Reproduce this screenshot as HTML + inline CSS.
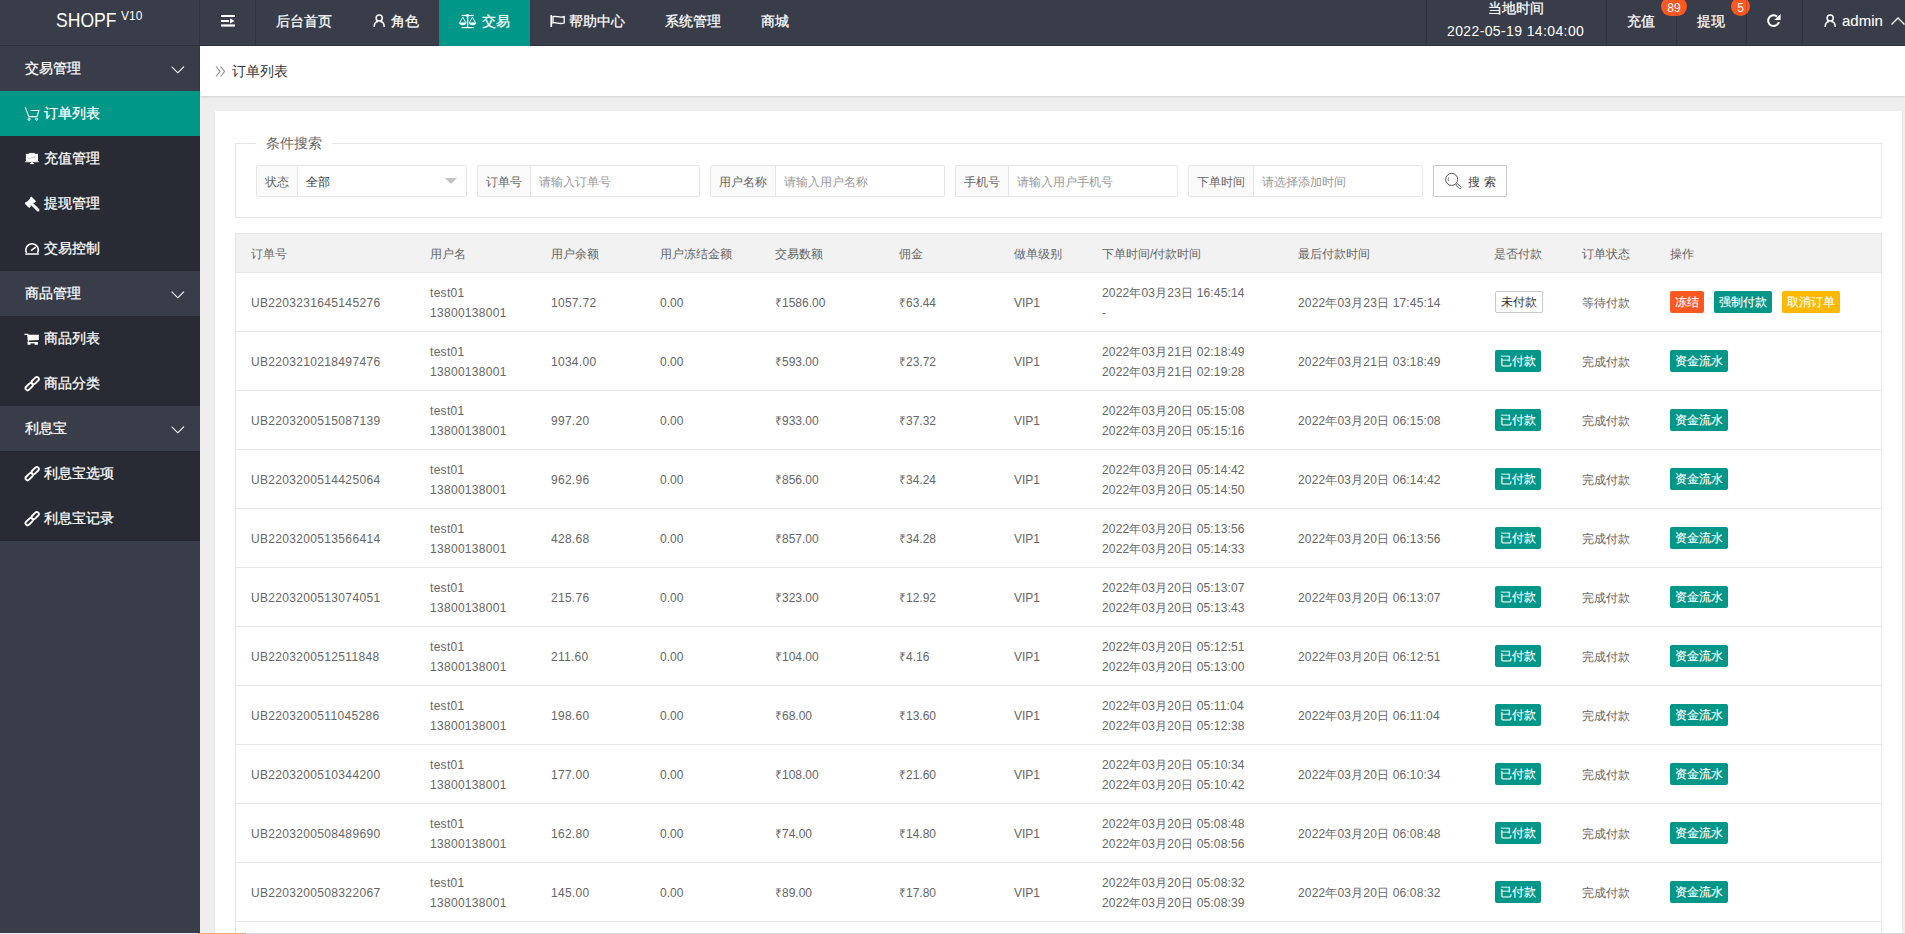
<!DOCTYPE html>
<html><head><meta charset="utf-8"><title>订单列表</title>
<style>
*{margin:0;padding:0;box-sizing:border-box}
html,body{width:1905px;height:934px;overflow:hidden}
body{background:#eeeeee;font-family:"Liberation Sans",sans-serif;font-size:14px;color:#666;position:relative}
.a{position:absolute;white-space:nowrap}
.hd{position:absolute;left:0;top:0;width:1905px;height:46px;background:#393D49;border-bottom:1px solid #2e313b}
.vs{position:absolute;top:0;width:1px;height:45px;background:rgba(0,0,0,.15);z-index:3}
.w{color:#fff;-webkit-text-stroke:0.25px #fff}
.side{position:absolute;left:0;top:46px;width:200px;height:888px;background:#393D49}
.side .it{position:absolute;left:0;width:200px;height:45px}
.side .ch{background:#282B33}
.side .on{background:#009688}
.side .tx{position:absolute;left:25px;top:0;line-height:45px;color:#fff;font-size:14px;white-space:nowrap;-webkit-text-stroke:0.25px #fff}
.side .ic{position:absolute;left:25px;top:0;width:14px;height:45px}
.side .tx2{left:44px}
.crumb{position:absolute;left:200px;top:46px;width:1705px;height:50px;background:#fff;box-shadow:0 1px 2px rgba(0,0,0,.12)}
.card{position:absolute;left:215px;top:111px;width:1687px;height:900px;background:#fff;box-shadow:0 1px 2px 0 rgba(0,0,0,.08)}
.fs{position:absolute;left:235px;top:143px;width:1647px;height:75px;border:1px solid #e6e6e6}
.lg{position:absolute;left:256px;top:133px;width:76px;height:20px;background:#fff;text-align:center;line-height:20px;font-size:14px;color:#666}
.grp{position:absolute;top:165px;height:32px;border:1px solid #e6e6e6;border-radius:2px;background:#fff}
.lab{position:absolute;left:0;top:0;height:30px;line-height:32px;background:#FAFAFA;border-right:1px solid #e6e6e6;font-size:12px;color:#666;padding:0 8px;border-radius:2px 0 0 2px}
.ph{position:absolute;top:1px;line-height:30px;font-size:12px;color:#999;white-space:nowrap}
.sbtn{position:absolute;left:1433px;top:165px;width:74px;height:32px;border:1px solid #C9C9C9;border-radius:2px;background:#fff}
.tbl{position:absolute;left:235px;top:233px;width:1647px;height:720px;border:1px solid #e6e6e6;border-bottom:0;background:#fff}
.thead{position:absolute;left:0;top:0;width:1645px;height:39px;background:#f2f2f2;border-bottom:1px solid #e6e6e6}
.th{position:absolute;top:1px;line-height:38px;font-size:12px;color:#666;white-space:nowrap}
.tr{position:absolute;left:0;width:1645px;height:59px;border-bottom:1px solid #e6e6e6}
.td{position:absolute;top:1px;line-height:58px;font-size:12px;color:#666;white-space:nowrap}
.td2{position:absolute;top:10px;line-height:20px;font-size:12px;color:#666;white-space:nowrap}
.btn{position:absolute;top:18px;height:22px;line-height:22px;padding:0 5px;font-size:12px;color:#fff;-webkit-text-stroke:0.15px #fff;background:#009688;border-radius:2px;white-space:nowrap}
.btn.pri{background:#fff;color:#333;-webkit-text-stroke:0;border:1px solid #C9C9C9;line-height:20px}
.btn.red{background:#FF5722}
.btn.yel{background:#FFB800}

</style></head>
<body>
<div class="hd">
  <div class="a w" style="left:56px;top:7px;font-size:19.5px;line-height:26px;transform:scaleX(0.9);transform-origin:0 0;-webkit-text-stroke:0">SHOPF</div><div class="a w" style="left:121px;top:6px;font-size:13px;line-height:20px;transform:scaleX(0.92);transform-origin:0 0;-webkit-text-stroke:0">V10</div>
  <div class="vs" style="left:199px"></div>
  <svg class="a" style="left:221px;top:15px" width="14" height="12" viewBox="0 0 14 12"><rect x="0" y="0" width="14" height="2" fill="#fff"/><rect x="0" y="5" width="8" height="2" fill="#fff"/><path d="M9 3.2 L13.6 6 L9 8.6Z" fill="#fff"/><rect x="0" y="9.4" width="14" height="2.2" fill="#fff"/></svg>
  <div class="vs" style="left:255px"></div>
  <div class="a w" style="left:276px;top:0;line-height:42px">后台首页</div>
  <svg class="a" style="left:373px;top:14px" width="13" height="14" viewBox="0 0 13 14"><circle cx="6.2" cy="4" r="3.1" fill="none" stroke="#fff" stroke-width="1.5"/><path d="M1.2 13 C1.2 9.8 3 7.8 5 7.6 M7.4 7.6 C9.4 7.8 11.2 9.8 11.2 13" fill="none" stroke="#fff" stroke-width="1.5"/></svg>
  <div class="a w" style="left:391px;top:0;line-height:42px">角色</div>
  <div class="a" style="left:439px;top:0;width:91px;height:46px;background:#009688"></div>
  <svg class="a" style="left:459px;top:14px" width="18" height="15" viewBox="0 0 18 15"><rect x="2.6" y="0.9" width="12.2" height="1.2" fill="#fff"/><circle cx="8.5" cy="1.5" r="1.4" fill="#fff"/><rect x="7.9" y="1" width="1.4" height="12.5" fill="#fff"/><rect x="2.6" y="13" width="12.2" height="1.2" fill="#fff"/><path d="M3.8 3.1 L0.6 8.8 M3.8 3.1 L6.9 8.8 M13.4 3.1 L10.2 8.8 M13.4 3.1 L16.6 8.8" stroke="#fff" stroke-width="1" fill="none"/><path d="M0 8.6 H7.3 Q7.1 11.2 3.65 11.2 Q0.2 11.2 0 8.6Z M10 8.6 H17.3 Q17.1 11.2 13.65 11.2 Q10.2 11.2 10 8.6Z" fill="#fff"/></svg>
  <div class="a w" style="left:482px;top:0;line-height:42px">交易</div>
  <svg class="a" style="left:550px;top:14px" width="16" height="14" viewBox="0 0 16 14"><rect x="0.4" y="1" width="1.7" height="12" fill="#fff"/><path d="M3 2.6 C6 1.2 9 4.4 14.2 2.6 V9 C9 10.8 6 7.6 3 9 Z" fill="none" stroke="#fff" stroke-width="1.3"/></svg>
  <div class="a w" style="left:569px;top:0;line-height:42px">帮助中心</div>
  <div class="a w" style="left:665px;top:0;line-height:42px">系统管理</div>
  <div class="a w" style="left:761px;top:0;line-height:42px">商城</div>

  <div class="vs" style="left:1426px"></div>
  <div class="a w" style="left:1488px;top:-2px;line-height:20px">当地时间</div>
  <div class="a w" style="left:1447px;top:21px;line-height:20px;letter-spacing:0.38px;-webkit-text-stroke:0">2022-05-19 14:04:00</div>
  <div class="vs" style="left:1606px"></div>
  <div class="a w" style="left:1627px;top:0;line-height:42px">充值</div>
  <div class="a" style="left:1661px;top:-3px;width:26px;height:19px;border-radius:10px;background:#FF5722;color:#fff;font-size:12px;text-align:center;line-height:23px">89</div>
  <div class="vs" style="left:1676px"></div>
  <div class="a w" style="left:1697px;top:0;line-height:42px">提现</div>
  <div class="a" style="left:1731px;top:-3px;width:19px;height:19px;border-radius:10px;background:#FF5722;color:#fff;font-size:12px;text-align:center;line-height:23px">5</div>
  <div class="vs" style="left:1746px"></div>
  <svg class="a" style="left:1767px;top:14px" width="14" height="13" viewBox="0 0 14 13"><path d="M10.07 2.46 A5.4 5.4 0 1 0 11.82 8.0" fill="none" stroke="#fff" stroke-width="2"/><path d="M13.6 0 V6 H7.3Z" fill="#fff"/></svg>
  <div class="vs" style="left:1802px"></div>
  <svg class="a" style="left:1824px;top:14px" width="13" height="14" viewBox="0 0 13 14"><circle cx="6.2" cy="4" r="3.1" fill="none" stroke="#fff" stroke-width="1.5"/><path d="M1.2 13 C1.2 9.8 3 7.8 5 7.6 M7.4 7.6 C9.4 7.8 11.2 9.8 11.2 13" fill="none" stroke="#fff" stroke-width="1.5"/></svg>
  <div class="a w" style="left:1842px;top:0;line-height:42px;font-size:15px;-webkit-text-stroke:0.1px #fff">admin</div>
  <svg class="a" style="left:1891px;top:17px" width="14" height="8" viewBox="0 0 14 8"><path d="M0.5 7.5 L7 1 L13.5 7.5" fill="none" stroke="#fff" stroke-width="1.3"/></svg>
</div>

<div class="side">
  <div class="it" style="top:0"><span class="tx">交易管理</span><svg class="a" style="left:171px;top:20px" width="14" height="8" viewBox="0 0 14 8"><path d="M0.6 0.6 L6.8 6.8 L13 0.6" fill="none" stroke="#fff" stroke-width="1.15"/></svg></div>
  <div class="it on" style="top:45px"><svg class="a" style="left:24px;top:15px" width="16" height="16" viewBox="0 0 16 16"><path d="M1.2 1.2 L4.9 10.6 H13 L14.9 4.4 H6.6" fill="none" stroke="#fff" stroke-width="1.05"/><circle cx="5.1" cy="13.2" r="1.1" fill="none" stroke="#fff" stroke-width="1"/><circle cx="12.6" cy="13.2" r="1.1" fill="none" stroke="#fff" stroke-width="1"/></svg><span class="tx tx2">订单列表</span></div>
  <div class="it ch" style="top:90px"><svg class="a" style="left:24px;top:16px" width="16" height="13" viewBox="0 0 16 13"><rect x="5" y="0.9" width="5.8" height="1.6" fill="#ddd"/><rect x="1.9" y="1.8" width="12.1" height="8" fill="#fff"/><rect x="1" y="9.3" width="14" height="0.9" fill="#eee"/><path d="M4 6.6 L6.5 6.2 L8 5.6 L10 5.3 L11.5 4.2" stroke="#c9b7b7" stroke-width="0.8" fill="none"/><rect x="7.2" y="10" width="1.6" height="1.2" fill="#fff"/><rect x="5.9" y="11" width="4.2" height="1.1" fill="#fff"/></svg><span class="tx tx2">充值管理</span></div>
  <div class="it ch" style="top:135px"><svg class="a" style="left:25px;top:15px" width="16" height="17" viewBox="0 0 16 17"><g transform="translate(5.3 6.3) rotate(-45)"><rect x="-4.9" y="-3.3" width="2.6" height="6.6" fill="#fff"/><rect x="2.3" y="-3.3" width="2.6" height="6.6" fill="#fff"/><rect x="-3" y="-2.7" width="6" height="5.4" fill="#fff"/></g><line x1="6.5" y1="7.5" x2="13" y2="14" stroke="#fff" stroke-width="3" stroke-linecap="round"/></svg><span class="tx tx2">提现管理</span></div>
  <div class="it ch" style="top:180px"><svg class="a" style="left:25px;top:16px" width="15" height="14" viewBox="0 0 15 14"><path d="M1.68 11 A6.2 6.2 0 1 1 12.42 11" fill="none" stroke="#fff" stroke-width="1.6"/><rect x="0.3" y="11" width="13.6" height="2" fill="#c8c8cc"/><line x1="6.1" y1="8.6" x2="10.7" y2="5.2" stroke="#fff" stroke-width="1.6"/></svg><span class="tx tx2">交易控制</span></div>
  <div class="it" style="top:225px"><span class="tx">商品管理</span><svg class="a" style="left:171px;top:20px" width="14" height="8" viewBox="0 0 14 8"><path d="M0.6 0.6 L6.8 6.8 L13 0.6" fill="none" stroke="#fff" stroke-width="1.15"/></svg></div>
  <div class="it ch" style="top:270px"><svg class="a" style="left:24px;top:17px" width="16" height="13" viewBox="0 0 16 13"><path d="M0.4 1.4 H3.8 L4.6 8.6" fill="none" stroke="#fff" stroke-width="1.4"/><path d="M4 1.8 H14.9 V6.9 L4.7 7.4Z" fill="#fff"/><rect x="3.6" y="9" width="10.2" height="1.4" fill="#fff"/><rect x="3.6" y="9" width="2.9" height="2.8" fill="#fff"/><rect x="10.6" y="9" width="3.2" height="2.8" fill="#fff"/></svg><span class="tx tx2">商品列表</span></div>
  <div class="it ch" style="top:315px"><svg class="a" style="left:24px;top:14px" width="17" height="17" viewBox="0 0 17 17"><g fill="none" stroke="#fff" stroke-width="1.9"><rect x="-2.05" y="-4.3" width="4.1" height="8.6" rx="2.05" transform="translate(11.2 5.65) rotate(45)"/><rect x="-2.05" y="-4.3" width="4.1" height="8.6" rx="2.05" transform="translate(5.2 11.65) rotate(45)"/></g></svg><span class="tx tx2">商品分类</span></div>
  <div class="it" style="top:360px"><span class="tx">利息宝</span><svg class="a" style="left:171px;top:20px" width="14" height="8" viewBox="0 0 14 8"><path d="M0.6 0.6 L6.8 6.8 L13 0.6" fill="none" stroke="#fff" stroke-width="1.15"/></svg></div>
  <div class="it ch" style="top:405px"><svg class="a" style="left:24px;top:14px" width="17" height="17" viewBox="0 0 17 17"><g fill="none" stroke="#fff" stroke-width="1.9"><rect x="-2.05" y="-4.3" width="4.1" height="8.6" rx="2.05" transform="translate(11.2 5.65) rotate(45)"/><rect x="-2.05" y="-4.3" width="4.1" height="8.6" rx="2.05" transform="translate(5.2 11.65) rotate(45)"/></g></svg><span class="tx tx2">利息宝选项</span></div>
  <div class="it ch" style="top:450px"><svg class="a" style="left:24px;top:14px" width="17" height="17" viewBox="0 0 17 17"><g fill="none" stroke="#fff" stroke-width="1.9"><rect x="-2.05" y="-4.3" width="4.1" height="8.6" rx="2.05" transform="translate(11.2 5.65) rotate(45)"/><rect x="-2.05" y="-4.3" width="4.1" height="8.6" rx="2.05" transform="translate(5.2 11.65) rotate(45)"/></g></svg><span class="tx tx2">利息宝记录</span></div>
</div>

<div class="crumb">
  <svg class="a" style="left:15px;top:20px" width="11" height="11" viewBox="0 0 11 11"><path d="M1 0.5 L5 5.5 L1 10.5 M5.5 0.5 L9.5 5.5 L5.5 10.5" fill="none" stroke="#888" stroke-width="1.1"/></svg>
  <div class="a" style="left:32px;top:1px;line-height:48px;color:#333;font-size:14px">订单列表</div>
</div>

<div class="card"></div>
<div class="fs"></div>
<div class="lg">条件搜索</div>

<div class="grp" style="left:256px;width:211px"><span class="lab">状态</span><span class="ph" style="left:49px;color:#333">全部</span><svg class="a" style="left:188px;top:12px" width="12" height="6" viewBox="0 0 12 6"><path d="M0 0 H12 L6 6Z" fill="#c2c2c2"/></svg></div>
<div class="grp" style="left:477px;width:223px"><span class="lab">订单号</span><span class="ph" style="left:61px">请输入订单号</span></div>
<div class="grp" style="left:710px;width:235px"><span class="lab">用户名称</span><span class="ph" style="left:73px">请输入用户名称</span></div>
<div class="grp" style="left:955px;width:223px"><span class="lab">手机号</span><span class="ph" style="left:61px">请输入用户手机号</span></div>
<div class="grp" style="left:1188px;width:235px"><span class="lab">下单时间</span><span class="ph" style="left:73px">请选择添加时间</span></div>
<div class="sbtn"><svg class="a" style="left:11px;top:7px" width="18" height="18" viewBox="0 0 18 18"><circle cx="6.7" cy="6.4" r="6" fill="none" stroke="#555" stroke-width="1"/><rect x="-2.9" y="-1.1" width="5.8" height="2.2" rx="0.6" transform="translate(13.7 13.3) rotate(45)" fill="none" stroke="#555" stroke-width="0.9"/><path d="M3.8 4.3 A3.6 3.6 0 0 0 3.8 8.3" fill="none" stroke="#555" stroke-width="0.8"/></svg><span class="a" style="left:34px;top:1px;line-height:30px;font-size:12px;color:#444;letter-spacing:4px">搜索</span></div>

<div class="tbl">
<div class="thead">
<span class="th" style="left:15px">订单号</span>
<span class="th" style="left:194px">用户名</span>
<span class="th" style="left:315px">用户余额</span>
<span class="th" style="left:424px">用户冻结金额</span>
<span class="th" style="left:539px">交易数额</span>
<span class="th" style="left:663px">佣金</span>
<span class="th" style="left:778px">做单级别</span>
<span class="th" style="left:866px">下单时间/付款时间</span>
<span class="th" style="left:1062px">最后付款时间</span>
<span class="th" style="left:1258px">是否付款</span>
<span class="th" style="left:1346px">订单状态</span>
<span class="th" style="left:1434px">操作</span>
</div>
<div class="tr" style="top:39px">
<span class="td" style="left:15px;letter-spacing:0.33px">UB2203231645145276</span>
<span class="td2" style="left:194px;letter-spacing:0.3px">test01<br>13800138001</span>
<span class="td" style="left:315px;letter-spacing:0.28px">1057.72</span>
<span class="td" style="left:424px;letter-spacing:0px">0.00</span>
<span class="td" style="left:539px;letter-spacing:0px">₹1586.00</span>
<span class="td" style="left:663px;letter-spacing:0px">₹63.44</span>
<span class="td" style="left:778px;letter-spacing:0px">VIP1</span>
<span class="td2" style="left:866px;letter-spacing:0.16px">2022年03月23日 16:45:14<br>-</span>
<span class="td" style="left:1062px;letter-spacing:0.16px">2022年03月23日 17:45:14</span>
<span class="btn pri" style="left:1259px">未付款</span>
<span class="td" style="left:1346px">等待付款</span>
<span class="btn red" style="left:1434px">冻结</span>
<span class="btn" style="left:1478px">强制付款</span>
<span class="btn yel" style="left:1546px">取消订单</span>
</div>
<div class="tr" style="top:98px">
<span class="td" style="left:15px;letter-spacing:0.33px">UB2203210218497476</span>
<span class="td2" style="left:194px;letter-spacing:0.3px">test01<br>13800138001</span>
<span class="td" style="left:315px;letter-spacing:0.28px">1034.00</span>
<span class="td" style="left:424px;letter-spacing:0px">0.00</span>
<span class="td" style="left:539px;letter-spacing:0px">₹593.00</span>
<span class="td" style="left:663px;letter-spacing:0px">₹23.72</span>
<span class="td" style="left:778px;letter-spacing:0px">VIP1</span>
<span class="td2" style="left:866px;letter-spacing:0.16px">2022年03月21日 02:18:49<br>2022年03月21日 02:19:28</span>
<span class="td" style="left:1062px;letter-spacing:0.16px">2022年03月21日 03:18:49</span>
<span class="btn" style="left:1259px">已付款</span>
<span class="td" style="left:1346px">完成付款</span>
<span class="btn" style="left:1434px">资金流水</span>
</div>
<div class="tr" style="top:157px">
<span class="td" style="left:15px;letter-spacing:0.33px">UB2203200515087139</span>
<span class="td2" style="left:194px;letter-spacing:0.3px">test01<br>13800138001</span>
<span class="td" style="left:315px;letter-spacing:0.28px">997.20</span>
<span class="td" style="left:424px;letter-spacing:0px">0.00</span>
<span class="td" style="left:539px;letter-spacing:0px">₹933.00</span>
<span class="td" style="left:663px;letter-spacing:0px">₹37.32</span>
<span class="td" style="left:778px;letter-spacing:0px">VIP1</span>
<span class="td2" style="left:866px;letter-spacing:0.16px">2022年03月20日 05:15:08<br>2022年03月20日 05:15:16</span>
<span class="td" style="left:1062px;letter-spacing:0.16px">2022年03月20日 06:15:08</span>
<span class="btn" style="left:1259px">已付款</span>
<span class="td" style="left:1346px">完成付款</span>
<span class="btn" style="left:1434px">资金流水</span>
</div>
<div class="tr" style="top:216px">
<span class="td" style="left:15px;letter-spacing:0.33px">UB2203200514425064</span>
<span class="td2" style="left:194px;letter-spacing:0.3px">test01<br>13800138001</span>
<span class="td" style="left:315px;letter-spacing:0.28px">962.96</span>
<span class="td" style="left:424px;letter-spacing:0px">0.00</span>
<span class="td" style="left:539px;letter-spacing:0px">₹856.00</span>
<span class="td" style="left:663px;letter-spacing:0px">₹34.24</span>
<span class="td" style="left:778px;letter-spacing:0px">VIP1</span>
<span class="td2" style="left:866px;letter-spacing:0.16px">2022年03月20日 05:14:42<br>2022年03月20日 05:14:50</span>
<span class="td" style="left:1062px;letter-spacing:0.16px">2022年03月20日 06:14:42</span>
<span class="btn" style="left:1259px">已付款</span>
<span class="td" style="left:1346px">完成付款</span>
<span class="btn" style="left:1434px">资金流水</span>
</div>
<div class="tr" style="top:275px">
<span class="td" style="left:15px;letter-spacing:0.33px">UB2203200513566414</span>
<span class="td2" style="left:194px;letter-spacing:0.3px">test01<br>13800138001</span>
<span class="td" style="left:315px;letter-spacing:0.28px">428.68</span>
<span class="td" style="left:424px;letter-spacing:0px">0.00</span>
<span class="td" style="left:539px;letter-spacing:0px">₹857.00</span>
<span class="td" style="left:663px;letter-spacing:0px">₹34.28</span>
<span class="td" style="left:778px;letter-spacing:0px">VIP1</span>
<span class="td2" style="left:866px;letter-spacing:0.16px">2022年03月20日 05:13:56<br>2022年03月20日 05:14:33</span>
<span class="td" style="left:1062px;letter-spacing:0.16px">2022年03月20日 06:13:56</span>
<span class="btn" style="left:1259px">已付款</span>
<span class="td" style="left:1346px">完成付款</span>
<span class="btn" style="left:1434px">资金流水</span>
</div>
<div class="tr" style="top:334px">
<span class="td" style="left:15px;letter-spacing:0.33px">UB2203200513074051</span>
<span class="td2" style="left:194px;letter-spacing:0.3px">test01<br>13800138001</span>
<span class="td" style="left:315px;letter-spacing:0.28px">215.76</span>
<span class="td" style="left:424px;letter-spacing:0px">0.00</span>
<span class="td" style="left:539px;letter-spacing:0px">₹323.00</span>
<span class="td" style="left:663px;letter-spacing:0px">₹12.92</span>
<span class="td" style="left:778px;letter-spacing:0px">VIP1</span>
<span class="td2" style="left:866px;letter-spacing:0.16px">2022年03月20日 05:13:07<br>2022年03月20日 05:13:43</span>
<span class="td" style="left:1062px;letter-spacing:0.16px">2022年03月20日 06:13:07</span>
<span class="btn" style="left:1259px">已付款</span>
<span class="td" style="left:1346px">完成付款</span>
<span class="btn" style="left:1434px">资金流水</span>
</div>
<div class="tr" style="top:393px">
<span class="td" style="left:15px;letter-spacing:0.33px">UB2203200512511848</span>
<span class="td2" style="left:194px;letter-spacing:0.3px">test01<br>13800138001</span>
<span class="td" style="left:315px;letter-spacing:0.28px">211.60</span>
<span class="td" style="left:424px;letter-spacing:0px">0.00</span>
<span class="td" style="left:539px;letter-spacing:0px">₹104.00</span>
<span class="td" style="left:663px;letter-spacing:0px">₹4.16</span>
<span class="td" style="left:778px;letter-spacing:0px">VIP1</span>
<span class="td2" style="left:866px;letter-spacing:0.16px">2022年03月20日 05:12:51<br>2022年03月20日 05:13:00</span>
<span class="td" style="left:1062px;letter-spacing:0.16px">2022年03月20日 06:12:51</span>
<span class="btn" style="left:1259px">已付款</span>
<span class="td" style="left:1346px">完成付款</span>
<span class="btn" style="left:1434px">资金流水</span>
</div>
<div class="tr" style="top:452px">
<span class="td" style="left:15px;letter-spacing:0.33px">UB2203200511045286</span>
<span class="td2" style="left:194px;letter-spacing:0.3px">test01<br>13800138001</span>
<span class="td" style="left:315px;letter-spacing:0.28px">198.60</span>
<span class="td" style="left:424px;letter-spacing:0px">0.00</span>
<span class="td" style="left:539px;letter-spacing:0px">₹68.00</span>
<span class="td" style="left:663px;letter-spacing:0px">₹13.60</span>
<span class="td" style="left:778px;letter-spacing:0px">VIP1</span>
<span class="td2" style="left:866px;letter-spacing:0.16px">2022年03月20日 05:11:04<br>2022年03月20日 05:12:38</span>
<span class="td" style="left:1062px;letter-spacing:0.16px">2022年03月20日 06:11:04</span>
<span class="btn" style="left:1259px">已付款</span>
<span class="td" style="left:1346px">完成付款</span>
<span class="btn" style="left:1434px">资金流水</span>
</div>
<div class="tr" style="top:511px">
<span class="td" style="left:15px;letter-spacing:0.33px">UB2203200510344200</span>
<span class="td2" style="left:194px;letter-spacing:0.3px">test01<br>13800138001</span>
<span class="td" style="left:315px;letter-spacing:0.28px">177.00</span>
<span class="td" style="left:424px;letter-spacing:0px">0.00</span>
<span class="td" style="left:539px;letter-spacing:0px">₹108.00</span>
<span class="td" style="left:663px;letter-spacing:0px">₹21.60</span>
<span class="td" style="left:778px;letter-spacing:0px">VIP1</span>
<span class="td2" style="left:866px;letter-spacing:0.16px">2022年03月20日 05:10:34<br>2022年03月20日 05:10:42</span>
<span class="td" style="left:1062px;letter-spacing:0.16px">2022年03月20日 06:10:34</span>
<span class="btn" style="left:1259px">已付款</span>
<span class="td" style="left:1346px">完成付款</span>
<span class="btn" style="left:1434px">资金流水</span>
</div>
<div class="tr" style="top:570px">
<span class="td" style="left:15px;letter-spacing:0.33px">UB2203200508489690</span>
<span class="td2" style="left:194px;letter-spacing:0.3px">test01<br>13800138001</span>
<span class="td" style="left:315px;letter-spacing:0.28px">162.80</span>
<span class="td" style="left:424px;letter-spacing:0px">0.00</span>
<span class="td" style="left:539px;letter-spacing:0px">₹74.00</span>
<span class="td" style="left:663px;letter-spacing:0px">₹14.80</span>
<span class="td" style="left:778px;letter-spacing:0px">VIP1</span>
<span class="td2" style="left:866px;letter-spacing:0.16px">2022年03月20日 05:08:48<br>2022年03月20日 05:08:56</span>
<span class="td" style="left:1062px;letter-spacing:0.16px">2022年03月20日 06:08:48</span>
<span class="btn" style="left:1259px">已付款</span>
<span class="td" style="left:1346px">完成付款</span>
<span class="btn" style="left:1434px">资金流水</span>
</div>
<div class="tr" style="top:629px">
<span class="td" style="left:15px;letter-spacing:0.33px">UB2203200508322067</span>
<span class="td2" style="left:194px;letter-spacing:0.3px">test01<br>13800138001</span>
<span class="td" style="left:315px;letter-spacing:0.28px">145.00</span>
<span class="td" style="left:424px;letter-spacing:0px">0.00</span>
<span class="td" style="left:539px;letter-spacing:0px">₹89.00</span>
<span class="td" style="left:663px;letter-spacing:0px">₹17.80</span>
<span class="td" style="left:778px;letter-spacing:0px">VIP1</span>
<span class="td2" style="left:866px;letter-spacing:0.16px">2022年03月20日 05:08:32<br>2022年03月20日 05:08:39</span>
<span class="td" style="left:1062px;letter-spacing:0.16px">2022年03月20日 06:08:32</span>
<span class="btn" style="left:1259px">已付款</span>
<span class="td" style="left:1346px">完成付款</span>
<span class="btn" style="left:1434px">资金流水</span>
</div>
</div>

<div class="a" style="left:0;top:933px;width:198px;height:1px;background:#e9e9f0"></div><div class="a" style="left:198px;top:933px;width:48px;height:1px;background:#f4a870"></div><div class="a" style="left:246px;top:933px;width:1659px;height:1px;background:#dcdce8"></div>

</body></html>
